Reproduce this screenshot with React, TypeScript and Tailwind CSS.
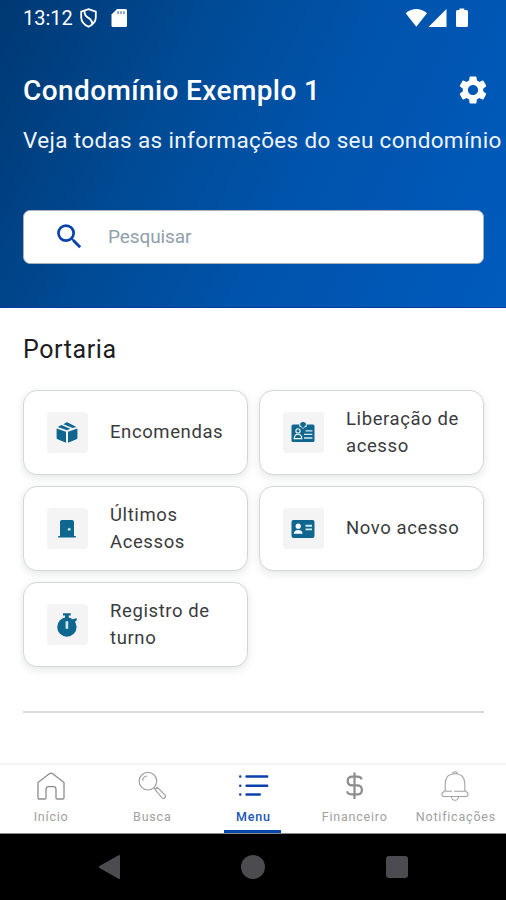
import React from 'react';
import { MdSettings, MdSearch } from 'react-icons/md';

type MenuItem = {
  label: string;
  icon: React.ReactNode;
};

const BoxIcon = () => (
  <svg className="-mt-[2px] mr-[2px]" width="22" height="22" viewBox="0 0 22 22" fill="#0f6790">
    <path d="M0.6 7.4 10 10.8V21.8L1.6 18.3Q0.6 17.9 0.6 17z" />
    <path d="M21.4 7.4 12 10.8V21.8L20.4 18.3Q21.4 17.9 21.4 17z" />
    <path d="M1.6 5.9 5.4 4.1 14.3 7.7 11 9.2z" />
    <path d="M7.4 3.2 10.2 1.6Q11 1.2 11.8 1.5L20.4 5.9 16.6 7z" />
  </svg>
);

const BadgeIcon = () => (
  <svg className="-mt-[2px] mr-px" width="24" height="22" viewBox="0 0 24 22">
    <path d="M2 3.5H8.5V6H15.5V3.5H22Q23.5 3.5 23.5 5V19.5Q23.5 21 22 21H2Q0.5 21 0.5 19.5V5Q0.5 3.5 2 3.5z" fill="#0f6790" />
    <path d="M9.3 2 12 0.8l2.8 1.2V4.5L12 7.5 9.3 4.5zM7 6h10v4H7z" fill="#0f6790" />
    <path d="M8.6 4.2 12 7.6l3.4-3.4" fill="none" stroke="#d7e8ee" strokeWidth="0.9" />
    <circle cx="7" cy="9.9" r="2.1" fill="none" stroke="#fff" strokeWidth="1.1" />
    <path d="M3.2 17.6Q3.4 13.2 7 13.2t3.8 4.4z" fill="none" stroke="#fff" strokeWidth="1.1" />
    <path d="M14.5 9.9h6.9M13 13.4h8.4M13 17h8.4" stroke="#d7e8ee" strokeWidth="1.4" />
  </svg>
);

const DoorIcon = () => (
  <svg className="mr-px" width="18" height="18" viewBox="0 0 18 18">
    <path d="M2 16V2Q2 0 4 0H14Q16 0 16 2V16H17.8V17.6H0.2V16z" fill="#0f6790" />
    <circle cx="11.2" cy="9.3" r="1.5" fill="#b9dbe6" />
  </svg>
);

const CardIcon = () => (
  <svg className="mr-px" width="24" height="20" viewBox="0 0 24 20">
    <rect x="0.5" y="1" width="23" height="18" rx="2" fill="#0f6790" />
    <circle cx="7.2" cy="7.2" r="2.6" fill="#fff" />
    <path d="M2.8 14.8Q3 10.9 7.2 10.9t4.4 3.9z" fill="#fff" />
    <path d="M14.5 6.7H21M14.5 10.4H21" stroke="#d2e8ef" strokeWidth="1.9" />
  </svg>
);

const StopwatchIcon = () => (
  <svg className="mr-px" width="20" height="24" viewBox="0 0 20 24">
    <path d="M6 0.3H13.7V2.5H11.8V5H8V2.5H6z" fill="#0f6790" />
    <path d="M14.6 6.8 19.4 5 19.8 7 17 10z" fill="#0f6790" />
    <circle cx="9.9" cy="14" r="9.7" fill="#0f6790" />
    <path d="M9.9 8.2v7.6" stroke="#d2e8ef" strokeWidth="2.6" />
  </svg>
);

const items: MenuItem[] = [
  { label: 'Encomendas', icon: <BoxIcon /> },
  { label: 'Liberação de acesso', icon: <BadgeIcon /> },
  { label: 'Últimos Acessos', icon: <DoorIcon /> },
  { label: 'Novo acesso', icon: <CardIcon /> },
  { label: 'Registro de turno', icon: <StopwatchIcon /> },
];

const StatusBar: React.FC = () => (
  <div className="flex h-[35px] items-center pr-[37px] pl-[23px] text-white">
    <span className="w-[50px] text-[20px] leading-none">13:12</span>
    <svg className="ml-[7px]" width="17" height="20" viewBox="0 0 17 20" fill="none" stroke="#fff" strokeWidth="1.8">
      <path d="M8.5 1.2 15.8 3.7V9.5Q15.6 15.5 8.5 18.8 1.4 15.5 1.2 9.5V3.7z" />
      <path d="M4.6 3.2Q4.2 7.5 8 9.6T12.4 16" strokeWidth="1.9" />
    </svg>
    <svg className="ml-[14px]" width="17" height="20" viewBox="0 0 17 20">
      <path d="M6 1H14.5Q16 1 16 2.5V17.5Q16 19 14.5 19H2Q0.5 19 0.5 17.5V6.5z" fill="#fff" />
      <path d="M7.1 3.2V6M10 3.2V6M12.9 3.2V6" stroke="#4f79aa" strokeWidth="1.3" />
    </svg>
    <div className="ml-auto flex items-center">
      <svg width="23" height="20" viewBox="0 0 23 20" fill="#fff">
        <path d="M0.7 5.2Q11.3-3 22 5.2L11.3 18.7z" />
      </svg>
      <svg width="20" height="20" viewBox="0 0 20 20" fill="#fff">
        <path d="M18.5 1V19H0.5z" />
      </svg>
      <svg className="ml-[7px]" width="14" height="20" viewBox="0 0 14 20" fill="#fff">
        <path d="M4.5 0.5h4.8V2H11.5Q13 2 13 3.5V17.5Q13 19 11.5 19H2.5Q1 19 1 17.5V3.5Q1 2 2.5 2H4.5z" />
      </svg>
    </div>
  </div>
);

const Header: React.FC = () => (
  <header className="h-[308px] border-b border-[#0738a4] bg-[linear-gradient(115deg,#003872_0%,#004a94_32%,#0053ab_58%,#005bbd_100%)]">
    <StatusBar />
    <div className="flex h-[110px] items-center justify-between pr-[16px] pl-[23px] text-white">
      <h1 className="pt-px text-[28px] leading-none font-medium tracking-[0.4px] whitespace-nowrap">Condomínio Exemplo 1</h1>
      <MdSettings size={34} />
    </div>
    <p className="-mt-[21px] h-[32px] pl-[23px] text-[22.5px] leading-[32px] tracking-[0.35px] whitespace-nowrap text-[#eef5ff]">
      Veja todas as informações do seu condomínio
    </p>
    <div className="mt-[54px] mr-[22px] ml-[23px] flex h-[54px] items-center rounded-[7px] border border-[#a9b0bb] bg-white pl-[29px]">
      <MdSearch className="-mt-px" size={33} color="#0a43ad" />
      <span className="ml-[22px] text-[19px] tracking-[-0.1px] text-[#8f9fab]">Pesquisar</span>
    </div>
  </header>
);

const MenuCard: React.FC<MenuItem> = ({ label, icon }) => (
  <button className="flex h-[85px] items-center rounded-[14px] border-[1.5px] border-[#d3d6d8] bg-white pl-[23px] text-left shadow-[0_3px_8px_rgba(40,60,60,0.12)]">
    <span className="flex size-[41px] shrink-0 items-center justify-center rounded-[4px] bg-[#f4f4f4]">{icon}</span>
    <span className="ml-[22px] w-[120px] text-[18.5px] leading-[27px] tracking-[0.6px] text-[#3a3b3e]">{label}</span>
  </button>
);

const HomeIcon = () => (
  <svg width="30" height="30" viewBox="0 0 30 30" fill="none" stroke="#8d8d8d" strokeWidth="1.3" strokeLinejoin="round">
    <path d="M2 11.5 13.6 2.6Q15 1.6 16.4 2.6L28 11.5V26.7q0 1.3-1.3 1.3H21.2Q20 28 20 26.7V18.5Q20 15.7 17.5 15.7H12.5Q10 15.7 10 18.5V26.7Q10 28 8.8 28H3.3Q2 28 2 26.7z" />
  </svg>
);

const MagnifierIcon = () => (
  <svg width="30" height="30" viewBox="0 0 30 30" fill="none" stroke="#a2a2a2" strokeWidth="1.2">
    <circle cx="10.9" cy="10.2" r="8.8" />
    <path d="M5.6 10Q5.6 5.5 10 5M17 16.7 19 18.6" />
    <path d="M18 18.6 20.4 16.3 28.2 24.3Q29 26.5 26.6 27.6 26 27.8 25.3 27.1z" />
  </svg>
);

const ListIcon = () => (
  <svg width="32" height="30" viewBox="0 0 32 30" fill="none" stroke="#0b3fae" strokeWidth="2.4" strokeLinecap="round">
    <path d="M3.2 5.5h.1M3.2 14.7h.1M3.2 23.5h.1M9.5 5.5H30.2M9.5 14.7H30.2M9.5 23.5H22.8" />
  </svg>
);

const DollarIcon = () => (
  <svg width="30" height="30" viewBox="0 0 30 30" fill="none" stroke="#8d8d8d" strokeWidth="2.2">
    <path d="M15.5 1.5V28M22.5 8.5Q22.3 5.6 18.5 5.6H13.5Q8.7 5.6 8.7 10T13.5 14.4H18Q22.9 14.4 22.9 18.9T18 23.4H12.5Q8.4 23.4 8.2 20.3" />
  </svg>
);

const BellIcon = () => (
  <svg width="30" height="30" viewBox="0 0 30 30" fill="none" stroke="#a2a2a2" strokeWidth="1.1">
    <path d="M12.6 2.8Q12.8 0.8 15 0.8t2.4 2M5.2 19.5V12.5Q5.5 2.8 15 2.8t9.8 9.7V19.5L27.8 22Q28.8 25.2 26 25.5H4Q1.2 25.2 2.2 22z" />
    <path d="M5.2 20.2H12M14 20.2H24.8M11.2 25.5Q12 29.3 15 29.3t3.8-3.8" />
  </svg>
);

const tabs = [
  { label: 'Início', icon: <HomeIcon />, active: false },
  { label: 'Busca', icon: <MagnifierIcon />, active: false },
  { label: 'Menu', icon: <ListIcon />, active: true },
  { label: 'Financeiro', icon: <DollarIcon />, active: false },
  { label: 'Notificações', icon: <BellIcon />, active: false },
];

const TabBar: React.FC = () => (
  <nav className="grid h-[71px] grid-cols-5 border-t-2 border-b border-t-[#f4f4f4] border-b-[#8a8a8a] bg-white">
    {tabs.map((tab) => (
      <div key={tab.label} className="flex flex-col items-center pt-[6px]">
        {tab.icon}
        <span className={`mt-[7px] pl-px text-[12.5px] leading-[18px] tracking-[0.8px] whitespace-nowrap ${tab.active ? 'font-medium text-[#1b55b7]' : 'text-[#a0a0a0]'}`}>
          {tab.label}
        </span>
        {tab.active && <span className="mt-[4px] h-[3px] w-[57px] shrink-0 bg-[#0748a8]" />}
      </div>
    ))}
  </nav>
);

const SystemBar: React.FC = () => (
  <div className="flex h-[66px] items-center bg-black pl-[98px]">
    <svg width="23" height="26" viewBox="0 0 23 26" fill="#4b4b50">
      <path d="M20.5 1.2Q22 0.5 22 2V24Q22 25.5 20.5 24.8L1.5 14Q0 13 1.5 12z" />
    </svg>
    <span className="ml-[120px] size-[24px] rounded-full bg-[#4b4b50]" />
    <span className="ml-[121px] size-[22px] rounded-[3px] bg-[#4b4b50]" />
  </div>
);

export default function App() {
  return (
    <div className="flex h-[900px] w-[506px] flex-col overflow-hidden bg-white font-['Roboto',sans-serif]">
      <Header />
      <main className="flex-1 pt-[25px] pr-[22px] pl-[23px]">
        <h2 className="text-[25px] leading-[34px] tracking-[0.6px] text-[#1c1c1e]">Portaria</h2>
        <div className="mt-[23px] grid grid-cols-2 gap-[11px]">
          {items.map((item) => (
            <MenuCard key={item.label} {...item} />
          ))}
        </div>
        <hr className="mt-[44px] border-t-2 border-[#d9dcdd]" />
      </main>
      <TabBar />
      <SystemBar />
    </div>
  );
}
